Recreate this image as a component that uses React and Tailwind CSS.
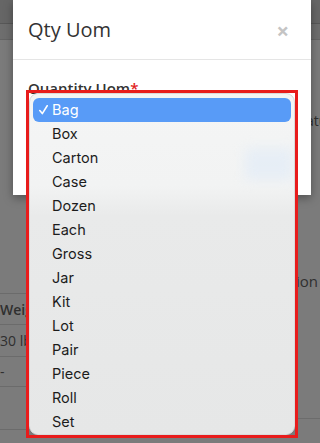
import React from "react";

const UNITS = [
  "Bag", "Box", "Carton", "Case", "Dozen", "Each", "Gross",
  "Jar", "Kit", "Lot", "Pair", "Piece", "Roll", "Set",
];

function Backdrop() {
  return (
    <div className="flex flex-col w-[320px] h-[443px] bg-[#7b7b7b] text-[#2f2f2f] font-['Open_Sans',sans-serif]">
      <div className="h-[24px] bg-[#666] border-b border-[#585858]" />
      <div className="h-[16px] bg-[#6e6e6e] border-b border-[#646464]" />
      <div className="h-[73px]" />
      <div className="flex justify-end h-[16px] text-[14px] leading-[16px]">
        <span className="whitespace-nowrap mr-[-14px]">Status</span>
      </div>
      <div className="grid grid-cols-2 flex-1 mt-[5px]">
        {/* left: table behind modal */}
        <div className="flex flex-col pt-[159px] text-[14px]">
          <div className="h-[31px] flex items-center border-t border-[#6b6b6b] font-semibold">Weight</div>
          <div className="h-[32px] flex items-center border-t border-[#6b6b6b]">30 lb</div>
          <div className="h-[30px] flex items-center border-t border-[#6b6b6b]">-</div>
          <div className="h-[43px] border-t border-[#6b6b6b]" />
          <div className="border-t border-[#6b6b6b]" />
        </div>
        {/* right: form text behind popup */}
        <div className="flex flex-col pt-[137px] text-[15px]">
          <div className="flex justify-end pr-[2px] h-[20px] leading-[20px]">
            <span className="whitespace-nowrap">Description</span>
          </div>
          <div className="h-[127px]" />
          <div className="border-t border-[#6c6c6c]" />
        </div>
      </div>
    </div>
  );
}

function Modal() {
  return (
    <div className="absolute left-[13px] top-0 w-[298px] h-[195px] bg-white shadow-[0_3px_9px_rgba(0,0,0,0.35)] font-['Open_Sans',sans-serif]">
      <div className="h-[60px] flex items-center justify-between pl-[15px] pr-[22px] border-b border-[#e5e5e5]">
        <h4 className="text-[20px] text-[#333] leading-none">Qty Uom</h4>
        <span className="text-[22px] font-bold text-[#c4c4c4] leading-none">×</span>
      </div>
      <div className="px-[15px] pt-[16px]">
        <label className="text-[15px] font-semibold text-[#333] leading-[20px]">
          Quantity Uom<span className="text-[#e02020]">*</span>
        </label>
      </div>
    </div>
  );
}

function Check() {
  return (
    <svg width="9" height="10" viewBox="0 0 9 10" fill="none">
      <path d="M0.8 5.6 L3.3 8.6 L8.2 0.8" stroke="white" strokeWidth="1.6" strokeLinecap="round" strokeLinejoin="round" />
    </svg>
  );
}

function SelectPopup() {
  return (
    <div className="absolute left-[26px] top-[90px] w-[272px] h-[348px] border-[3px] border-[#e81c1c]">
      <div className="relative h-full rounded-[9px] overflow-hidden border border-[#d9dadb] bg-[linear-gradient(to_bottom,#f4f5f5_0px,#f2f3f3_92px,#e9eaea_122px,#e6e7e7_100%)] pt-[4px] px-[3px] font-['Inter',sans-serif]">
        <div className="absolute left-[215px] top-[54px] w-[48px] h-[32px] bg-[#e2ecf7] blur-[6px] opacity-70" />
        <ul className="relative flex flex-col">
          {UNITS.map((u, i) => (
            <li
              key={u}
              className={
                i === 0
                  ? "h-[24px] flex items-center rounded-[6px] bg-[#589bf7] text-white text-[14.5px]"
                  : "h-[24px] flex items-center text-[#1c1c1c] text-[14.5px]"
              }
            >
              <span className="w-[19px] pl-[6px] flex items-center">{i === 0 && <Check />}</span>
              <span>{u}</span>
            </li>
          ))}
        </ul>
      </div>
    </div>
  );
}

export default function App() {
  return (
    <div className="relative w-[320px] h-[443px] overflow-hidden">
      <Backdrop />
      <Modal />
      <SelectPopup />
    </div>
  );
}
